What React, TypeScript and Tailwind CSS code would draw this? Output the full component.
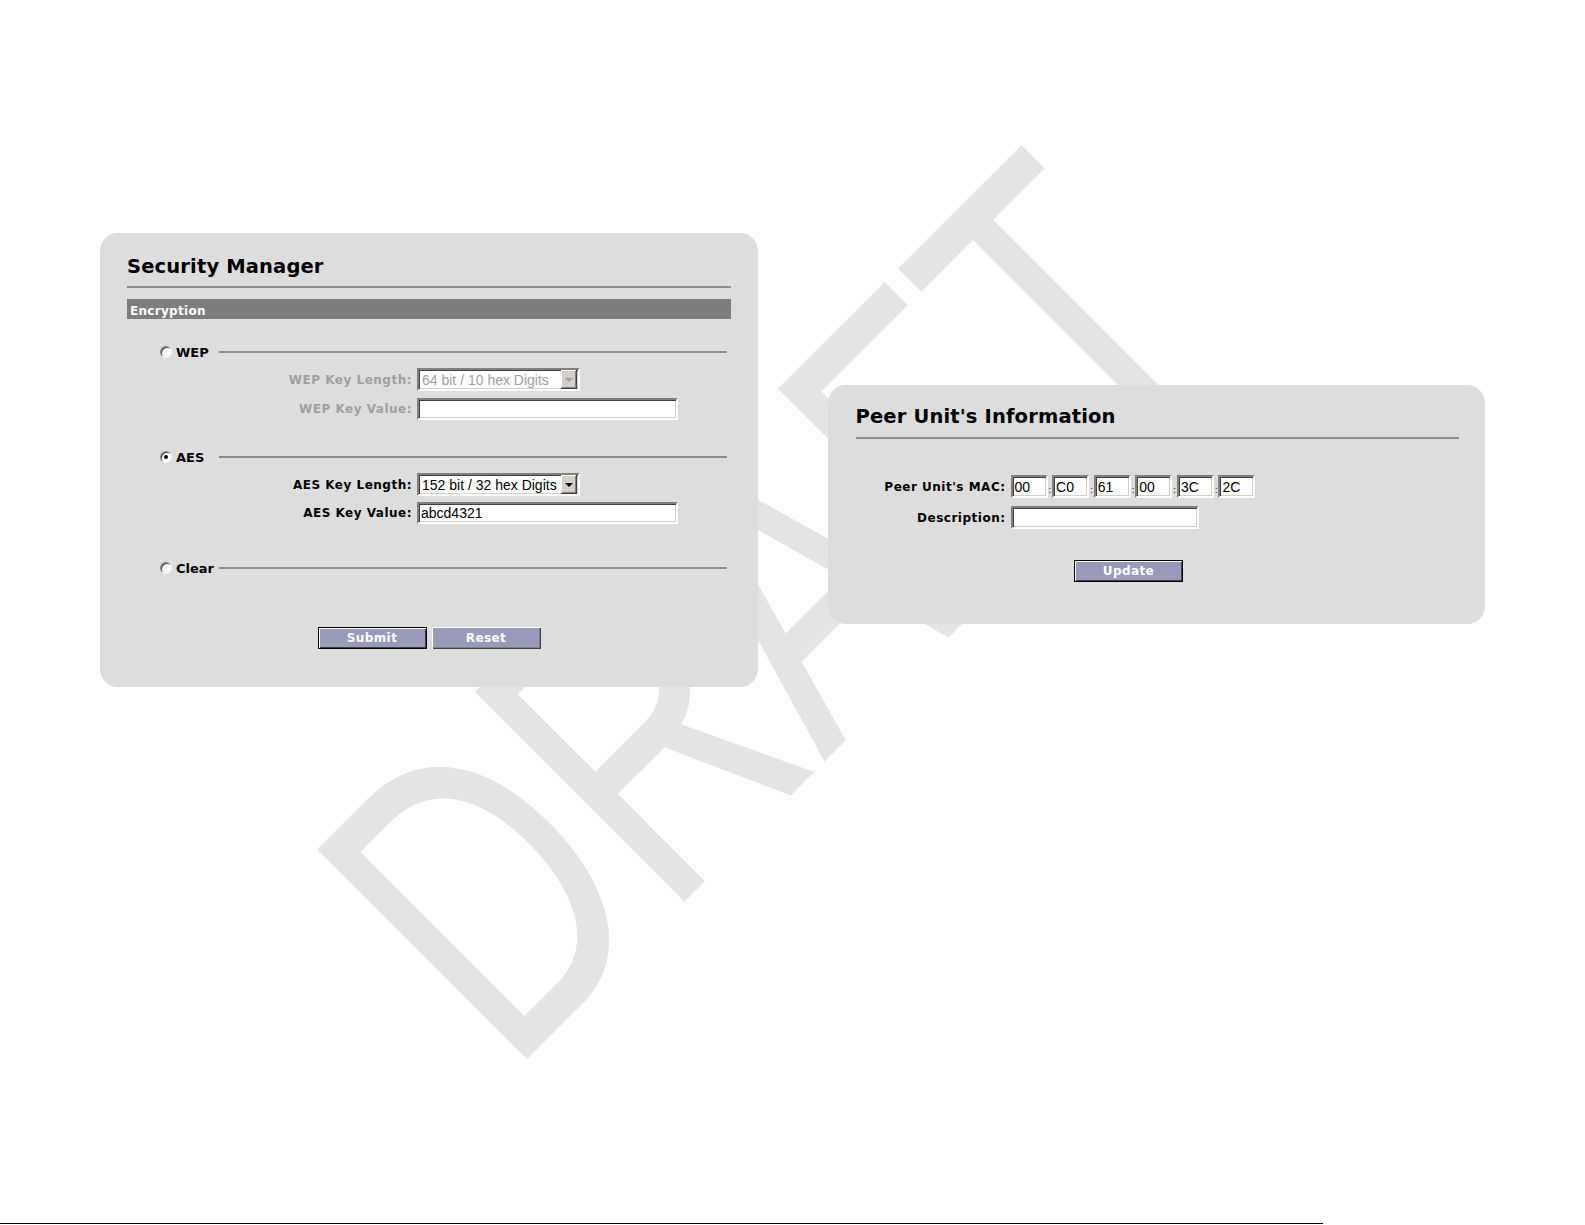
import React from "react";

const inset =
  "border-2 border-t-[#808080] border-l-[#808080] border-b-white border-r-white shadow-[inset_1px_1px_0_#404040,inset_-1px_-1px_0_#d4d0c8]";

function Radio({ checked }: { checked?: boolean }) {
  return (
    <div className="relative h-[12px] w-[12px] rounded-full border border-t-[#808080] border-l-[#808080] border-r-[#f4f4f4] border-b-[#f4f4f4] bg-white shadow-[inset_1px_1px_0_#404040]">
      {checked && (
        <div className="absolute left-[3px] top-[3px] h-[4px] w-[4px] rounded-full bg-black" />
      )}
    </div>
  );
}

function Select({ text, disabled }: { text: string; disabled?: boolean }) {
  return (
    <div className={`flex h-[23px] w-[163px] items-center bg-white pl-[3px] pr-[1px] ${inset}`}>
      <span
        className={`flex-1 font-['Liberation_Sans',Arial,sans-serif] text-[14px] leading-none ${
          disabled ? "text-[#a0a0a0]" : "text-black"
        }`}
      >
        {text}
      </span>
      <div className="flex h-[19px] w-[16px] items-center justify-center bg-[#d4d0c8] shadow-[inset_-1px_-1px_0_#404040,inset_1px_1px_0_#ffffff,inset_-2px_-2px_0_#808080]">
        <div
          className={`h-0 w-0 border-l-[4px] border-r-[4px] border-t-[4px] border-l-transparent border-r-transparent ${
            disabled ? "border-t-[#a0a0a0]" : "border-t-black"
          }`}
        />
      </div>
    </div>
  );
}

function TextBox({ w, h, value }: { w: string; h: string; value?: string }) {
  return (
    <div
      className={`flex items-center bg-white pl-[2px] font-['Liberation_Sans',Arial,sans-serif] text-[14px] leading-none text-black ${inset} ${w} ${h}`}
    >
      {value}
    </div>
  );
}

function RadioRow({ label, checked, mt }: { label: string; checked?: boolean; mt: string }) {
  return (
    <div className={`flex h-[14px] items-center ${mt}`}>
      <div className="ml-[33px]">
        <Radio checked={checked} />
      </div>
      <span className="ml-[4px] w-[43px] pt-[2px] text-[13px] font-bold leading-[14px] text-black">{label}</span>
      <div className="mr-[4px] h-[2px] flex-1 bg-[#8c8c8c]" />
    </div>
  );
}

function Button({ label, def }: { label: string; def?: boolean }) {
  return (
    <div
      className={`flex h-[22px] w-[109px] items-center justify-center bg-[#9999bb] text-[12px] font-bold leading-none tracking-[0.4px] text-white ${
        def
          ? "border border-black shadow-[inset_1px_1px_0_#ffffff,inset_-1px_-1px_0_#404040]"
          : "shadow-[inset_1px_1px_0_#ffffff,inset_-1px_-1px_0_#404040,inset_-2px_-2px_0_#808080]"
      }`}
    >
      {label}
    </div>
  );
}

const labelCls = "text-right text-[12px] font-bold leading-[14px] tracking-[0.5px]";

export default function App() {
  const mac = ["00", "C0", "61", "00", "3C", "2C"];
  return (
    <div className="relative flex h-[1225px] w-[1585px] flex-col overflow-hidden bg-white font-['DejaVu_Sans',Verdana,sans-serif]">
      <svg className="absolute left-0 top-0" width="1585" height="1225">
        <text
          transform="translate(509 1077) rotate(-45) scale(0.716 1)"
          fontFamily="'Liberation Sans', Arial, sans-serif"
          fontSize="431"
          fill="#e4e4e4"
        >
          DRAFT
        </text>
      </svg>

      <div className="relative flex items-start pl-[100px] pt-[233px]">
        {/* Security Manager */}
        <div className="flex h-[454px] w-[658px] flex-col rounded-[18px] bg-[#dddddd] pl-[27px] pr-[27px]">
          <div className="mt-[22px] h-[24px] text-[19.5px] font-bold leading-[24px] tracking-[0.15px] text-black">
            Security Manager
          </div>
          <div className="mt-[7px] h-[2px] bg-[#8c8c8c]" />
          <div className="mt-[11px] h-[20px] bg-[#7d7d7d] pl-[3px] pt-[4px] text-[12px] font-bold leading-[16px] tracking-[0.3px] text-white">
            Encryption
          </div>

          <RadioRow label="WEP" mt="mt-[26px]" />
          <div className="mt-[9px] flex items-center">
            <span className={`w-[285px] text-[#a0a0a0] ${labelCls}`}>WEP Key Length:</span>
            <div className="ml-[5px]">
              <Select text="64 bit / 10 hex Digits" disabled />
            </div>
          </div>
          <div className="mt-[7px] flex items-center">
            <span className={`w-[285px] text-[#a0a0a0] ${labelCls}`}>WEP Key Value:</span>
            <div className="ml-[5px]">
              <TextBox w="w-[261px]" h="h-[22px]" />
            </div>
          </div>

          <RadioRow label="AES" checked mt="mt-[30px]" />
          <div className="mt-[9px] flex items-center">
            <span className={`w-[285px] text-black ${labelCls}`}>AES Key Length:</span>
            <div className="ml-[5px]">
              <Select text="152 bit / 32 hex Digits" />
            </div>
          </div>
          <div className="mt-[6px] flex items-center">
            <span className={`w-[285px] text-black ${labelCls}`}>AES Key Value:</span>
            <div className="ml-[5px]">
              <TextBox w="w-[261px]" h="h-[22px]" value="abcd4321" />
            </div>
          </div>

          <RadioRow label="Clear" mt="mt-[37px]" />

          <div className="mt-[52px] flex justify-center gap-[5px]">
            <Button label="Submit" def />
            <Button label="Reset" />
          </div>
        </div>

        {/* Peer Unit's Information */}
        <div className="ml-[70px] mt-[152px] flex h-[239px] w-[657px] flex-col rounded-[18px] bg-[#dddddd] pl-[27.5px] pr-[26px]">
          <div className="mt-[20px] h-[24px] text-[19.5px] font-bold leading-[24px] tracking-[0.15px] text-black">
            Peer Unit's Information
          </div>
          <div className="mt-[8px] h-[2px] bg-[#8c8c8c]" />

          <div className="mt-[36px] flex items-center">
            <span className={`w-[150px] text-black ${labelCls}`}>Peer Unit's MAC:</span>
            <div className="ml-[5px] flex items-stretch">
              {mac.map((m, i) => (
                <React.Fragment key={i}>
                  {i > 0 && (
                    <div className="flex w-[4.6px] items-end justify-center pb-[3px] font-['Liberation_Sans',Arial,sans-serif] text-[9px] leading-none text-black">
                      :
                    </div>
                  )}
                  <TextBox w="w-[37px]" h="h-[23px]" value={m} />
                </React.Fragment>
              ))}
            </div>
          </div>

          <div className="mt-[8px] flex items-center">
            <span className={`w-[150px] text-black ${labelCls}`}>Description:</span>
            <div className="ml-[5px]">
              <TextBox w="w-[188px]" h="h-[23px]" />
            </div>
          </div>

          <div className="ml-[218.5px] mt-[31px]">
            <Button label="Update" def />
          </div>
        </div>
      </div>

      <div className="relative mb-[1px] mt-auto h-[1px] w-[1323px] bg-black" />
    </div>
  );
}
